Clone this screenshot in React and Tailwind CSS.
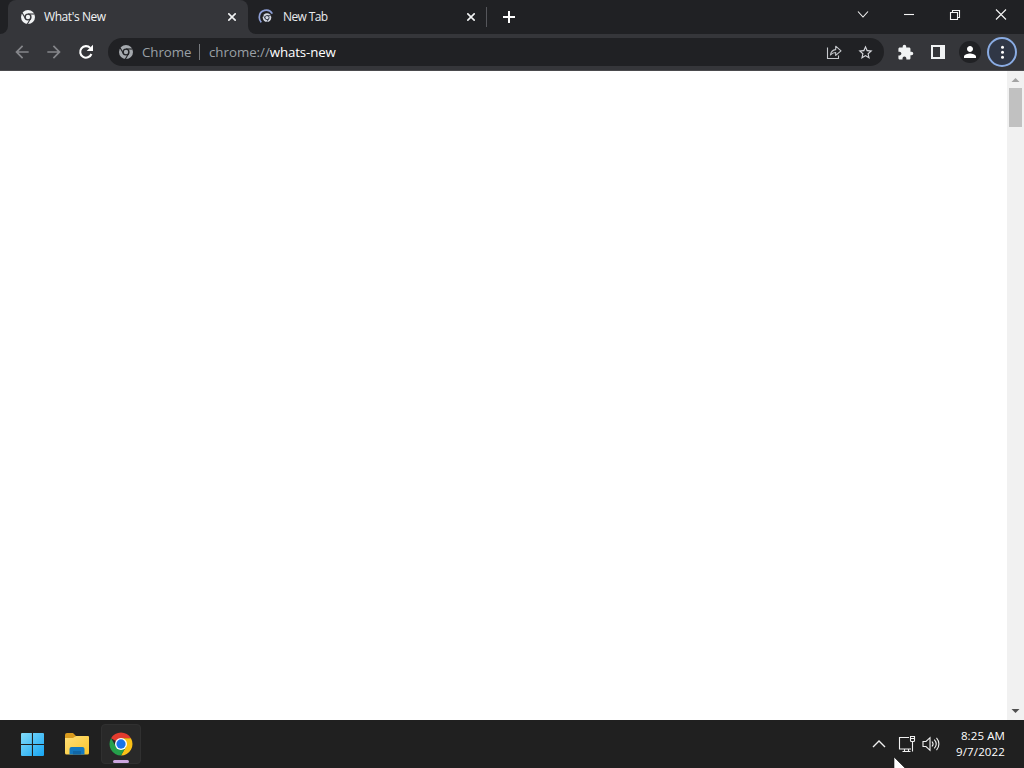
import React from "react";
import { MdArrowBack, MdArrowForward, MdExtension, MdStarBorder, MdPerson } from "react-icons/md";

function ChromeGlyph({ color, gap }) {
  return (
    <svg className="size-[14px] shrink-0" viewBox="0 0 14 14">
      <circle cx="7" cy="7" r="7" fill={color} />
      <circle cx="7" cy="7" r="3.6" fill={gap} />
      <g stroke={gap} strokeWidth="1.1">
        <path d="M7 4h6.6" />
        <path d="M7 4h6.6" transform="rotate(120 7 7)" />
        <path d="M7 4h6.6" transform="rotate(240 7 7)" />
      </g>
      <circle cx="7" cy="7" r="2.2" fill={color} />
    </svg>
  );
}

function CloseMark() {
  return (
    <svg className="size-2 shrink-0" viewBox="0 0 8 8" fill="none" stroke="#f1f3f4" strokeWidth="1.6">
      <path d="M.3.3l7.4 7.4M7.7.3L.3 7.7" />
    </svg>
  );
}

function NewTabIcon() {
  return (
    <svg className="size-4 shrink-0" viewBox="0 0 16 16" fill="none">
      <path d="M3.3 13.3A7 7 0 0 1 1.3 8a7 7 0 0 1 13-3.4" stroke="#8e9fd6" strokeWidth="1.7" />
      <circle cx="9" cy="8.6" r="4.3" fill="#d3d7e0" />
      <circle cx="9" cy="8.6" r="2.1" stroke="#303746" strokeWidth=".9" />
      <g stroke="#303746" strokeWidth=".8">
        <path d="M9 6.6h3.8" />
        <path d="M9 6.6h3.8" transform="rotate(120 9 8.6)" />
        <path d="M9 6.6h3.8" transform="rotate(240 9 8.6)" />
      </g>
    </svg>
  );
}

function TabStrip() {
  return (
    <header className="flex h-[34px] bg-[#202124]">
      <div className="flex w-2 bg-[#35363a]">
        <div className="w-2 rounded-br-lg bg-[#202124]" />
      </div>
      <div className="flex w-[240px] items-center rounded-t-lg bg-[#35363a] pl-[13px] pr-3">
        <ChromeGlyph color="#f1f3f4" gap="#35363a" />
        <span className="ml-[9px] grow text-[12px] font-medium tracking-[-0.42px] text-[#f1f3f4]">What's New</span>
        <CloseMark />
      </div>
      <div className="flex w-2 bg-[#35363a]">
        <div className="w-2 rounded-bl-lg bg-[#202124]" />
      </div>
      <div className="flex w-[231px] items-center pl-[2px]">
        <NewTabIcon />
        <span className="ml-[9px] grow text-[12px] font-medium tracking-[-0.6px] text-[#e8eaed]">New Tab</span>
        <CloseMark />
        <div className="ml-[11px] h-5 w-px bg-[#55565b]" />
      </div>
      <div className="flex grow items-center pl-4">
        <svg className="size-3" viewBox="0 0 12 12" stroke="#fff" strokeWidth="2">
          <path d="M6 0v12M0 6h12" />
        </svg>
      </div>
      <div className="flex h-[29px] w-[184px] items-center">
        {[
          "M1 2.5l5 5.5 5-5.5",
          "M1 5.5h10",
          "M1.5 3.5h7v7h-7zM3.5 3V1.5h7v7H9",
          "M1 .5l10 10M11 .5l-10 10",
        ].map((d) => (
          <div key={d} className="flex w-[46px] justify-center">
            <svg className="size-3" viewBox="0 0 12 12" fill="none" stroke="#f5f5f5" strokeWidth="1.1">
              <path d={d} />
            </svg>
          </div>
        ))}
      </div>
    </header>
  );
}

function Toolbar() {
  return (
    <nav className="flex h-[37px] items-center border-b border-[#4a4a4d] bg-[#35363a] pl-3">
      <MdArrowBack className="size-5 text-[#85868a]" />
      <MdArrowForward className="ml-3 size-5 text-[#85868a]" />
      <svg className="ml-3 size-5" viewBox="0 0 20 20">
        <path d="M15.4 12A5.8 5.8 0 1 1 14.2 5.9" fill="none" stroke="#fff" strokeWidth="2.1" />
        <path d="M17 2.7V9h-6.3z" fill="#fff" />
      </svg>
      <div className="ml-3 flex h-7 w-[776px] items-center rounded-full bg-[#202124] pl-[11px] pr-[10px] text-[13.3px] text-[#9aa0a6]">
        <ChromeGlyph color="#a5a9ae" gap="#202124" />
        <span className="ml-[9px] w-[49px] whitespace-nowrap pt-px tracking-[-0.05px]">Chrome</span>
        <div className="ml-2 h-4 w-px bg-[#777a7e]" />
        <span className="ml-[9px] grow whitespace-nowrap pt-px tracking-[-0.02px]">
          chrome://<span className="font-medium tracking-[-0.14px] text-white">whats-new</span>
        </span>
        <svg className="size-4" viewBox="0 0 16 16" fill="none" stroke="#c6c9cd" strokeWidth="1.1">
          <path d="M1.5 3.5v11h11v-3" />
          <path d="M4.5 11c.4-3.5 2.4-5.2 5.2-5.4V2.2L15 6.8l-5.3 4.6V8.5c-2.2 0-3.8.8-5.2 2.5z" strokeLinejoin="round" />
        </svg>
        <MdStarBorder className="ml-[15px] size-[17px] text-[#d5d7db]" />
      </div>
      <MdExtension className="ml-[13px] size-[17px] text-[#f1f3f4]" />
      <svg className="ml-[17px] h-[14px] w-[14px]" viewBox="0 0 14 14">
        <path fill="#f1f3f4" fillRule="evenodd" d="M0 0h14v14H0zM2 2v10h7V2z" />
      </svg>
      <div className="ml-[14px] flex size-[22px] items-center justify-center rounded-full bg-[#202124]">
        <MdPerson className="size-[18px] text-white" />
      </div>
      <div className="ml-[6px] flex size-[30px] items-center justify-center rounded-full border-2 border-[#8aace3] bg-[#303746]">
        <svg className="h-[14px] w-1" viewBox="0 0 4 14" fill="#fff">
          <circle cx="2.5" cy="2.3" r="1.5" />
          <circle cx="2.5" cy="7.3" r="1.5" />
          <circle cx="2.5" cy="12.3" r="1.5" />
        </svg>
      </div>
    </nav>
  );
}

function Page() {
  return (
    <main className="flex min-h-0 grow bg-white">
      <div className="grow" />
      <div className="flex w-[17px] flex-col items-center bg-[#f1f1f1]">
        <svg className="h-[17px] w-[9px]" viewBox="0 0 9 17"><path d="M.5 11h8l-4-4z" fill="#a3a3a3" /></svg>
        <div className="h-[39px] w-[13px] bg-[#c1c1c1]" />
        <div className="grow" />
        <svg className="h-[17px] w-[9px]" viewBox="0 0 9 17"><path d="M.5 6h8l-4 4z" fill="#505050" /></svg>
      </div>
    </main>
  );
}

function ColorChrome() {
  return (
    <svg className="size-6" viewBox="0 0 48 48">
      <path d="M24 24L4.1 12.5A23 23 0 0 1 43.9 12.5H24z" fill="#e33b2e" />
      <path d="M24 12.5h19.9A23 23 0 0 1 24 47l10-17.3z" fill="#fbc116" />
      <path d="M34 29.7L24 47A23 23 0 0 1 4.1 12.5L14 29.7z" fill="#25a04b" />
      <circle cx="24" cy="24" r="12" fill="#fff" />
      <circle cx="24" cy="24" r="9.3" fill="#1a73e8" />
    </svg>
  );
}

function Taskbar() {
  return (
    <footer className="relative flex h-12 items-center overflow-hidden bg-[#202020] pl-5">
      <svg className="size-6" viewBox="0 0 24 24">
        <defs>
          <linearGradient id="win" x1="0" y1="0" x2="1" y2="1" gradientUnits="objectBoundingBox">
            <stop stopColor="#83dcfa" />
            <stop offset="1" stopColor="#16a5f3" />
          </linearGradient>
        </defs>
        <path fill="url(#win)" d="M2 1h9.9v10.9H1V2a1 1 0 0 1 1-1zM13 1h10a1 1 0 0 1 1 1v9.9H13zM1 13h10.9v11H2a1 1 0 0 1-1-1zM13 13h11v10a1 1 0 0 1-1 1H13z" />
      </svg>
      <svg className="ml-5 h-[24px] w-[26px]" viewBox="0 0 26 24">
        <defs>
          <linearGradient id="folder" x1="0" y1="0" x2="1" y2="1">
            <stop stopColor="#ffdf78" />
            <stop offset="1" stopColor="#fac52c" />
          </linearGradient>
        </defs>
        <path d="M1 3a2 2 0 0 1 2-2h6l3 3-2 4H1z" fill="#d99a1d" />
        <path d="M1 6h8l3-2h12a1 1 0 0 1 1 1v16a1.5 1.5 0 0 1-1.5 1.5h-21A1.5 1.5 0 0 1 1 21z" fill="url(#folder)" />
        <path d="M5.5 22.5V17a2 2 0 0 1 2-2h11a2 2 0 0 1 2 2v5.5z" fill="#1478bf" />
        <path d="M9 19h8v3.5H9z" fill="#1166a5" />
      </svg>
      <div className="ml-[11px] flex h-10 w-10 flex-col items-center rounded-[4px] border border-[#303030] bg-[#292929] pt-[7px]">
        <ColorChrome />
        <div className="mt-[4px] h-[3px] w-4 shrink-0 rounded-full bg-[#cca6df]" />
      </div>
      <div className="grow" />
      <svg className="h-3 w-[14px]" viewBox="0 0 14 12" fill="none" stroke="#f0f0f0" strokeWidth="1.4"><path d="M1 9l6-6 6 6" /></svg>
      <svg className="ml-[12px] h-[18px] w-[18px]" viewBox="0 0 18 18" fill="none" stroke="#f0f0f0" strokeWidth="1.1">
        <path d="M11 2.5H1.5v11.5H13M4.5 16.5h8M6.5 14v2.5M10.5 14v2.5M14.5 7v9.5M12.5 1.5h4v4a1 1 0 0 1-1 1h-2a1 1 0 0 1-1-1zM12.5 3.5h4" />
      </svg>
      <svg className="ml-[6px] h-[16px] w-[18px]" viewBox="0 0 18 16" fill="none" stroke="#f0f0f0" strokeWidth="1.1">
        <path d="M1 5.5h3l4-3.8v12.6l-4-3.8H1zM10 5.5c1.3 1.5 1.3 3.5 0 5M12.3 3.6c2.3 2.6 2.3 6.2 0 8.8M14.5 1.8c3.2 3.7 3.2 8.7 0 12.4" />
      </svg>
      <div className="ml-[13px] mr-[19px] flex w-[52px] flex-col items-end whitespace-nowrap text-[11.5px] leading-4 text-white">
        <span className="tracking-[0.1px]">8:25 AM</span>
        <span className="tracking-[0.13px]">9/7/2022</span>
      </div>
      <svg className="absolute left-[893px] top-[37px] h-[18px] w-3" viewBox="0 0 12 18">
        <path d="M1 0v17l4-4 2 5 3-1-2-5h5z" fill="#fff" stroke="#111" strokeWidth=".6" />
      </svg>
    </footer>
  );
}

export default function App() {
  return (
    <div className="flex h-[768px] w-[1024px] flex-col overflow-hidden font-['Open_Sans','Noto_Sans',sans-serif]">
      <TabStrip />
      <Toolbar />
      <Page />
      <Taskbar />
    </div>
  );
}
